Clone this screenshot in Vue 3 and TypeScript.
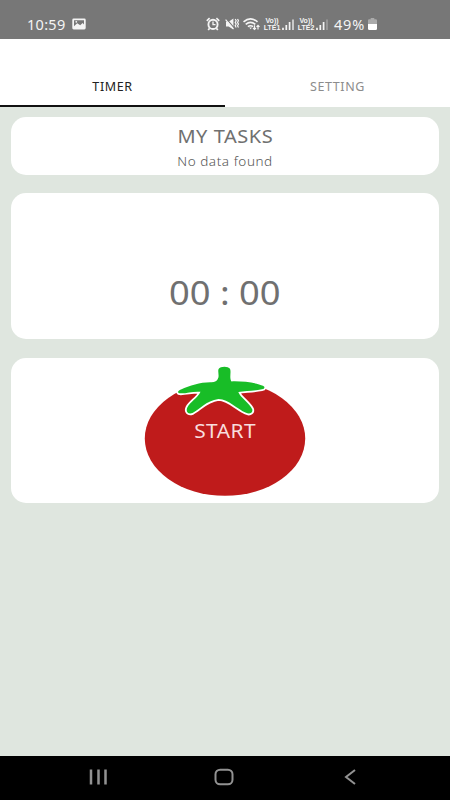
<script setup lang="ts">
import { ref } from 'vue'

type Tab = 'TIMER' | 'SETTING'

const tabs: Tab[] = ['TIMER', 'SETTING']
const activeTab = ref<Tab>('TIMER')
const minutes = ref(0)
const seconds = ref(0)
const sims = [1, 2]

const pad = (n: number): string => String(n).padStart(2, '0')
</script>

<template>
  <div class="screen">
    <header class="status">
      <span class="clock">10:59</span>
      <svg class="picture" width="14" height="12" viewBox="0 0 14 12">
        <rect x="0.3" y="0.5" width="13.4" height="11" rx="1.4" fill="#f4f4f4" />
        <path d="M2 8.2V2.2h10v4.2L10.6 5 8.2 7.3 5.2 5.2z" fill="#777" />
        <circle cx="4.3" cy="3.8" r="0.9" fill="#f4f4f4" />
      </svg>
      <div class="indicators">
        <svg class="alarm" width="14" height="14" viewBox="0 0 14 14" fill="none" stroke="#f4f4f4">
          <circle cx="7" cy="7.4" r="4.6" stroke-width="1.9" />
          <path d="M.8 3.8 3.6 1.2M13.2 3.8 10.4 1.2M3.6 11.2 2.2 13M10.4 11.2l1.4 1.8" stroke-width="1.7" />
          <path d="M7 4.6v3h2.5" stroke-width="1.3" />
        </svg>
        <svg class="mute" width="14" height="14" viewBox="0 0 14 14">
          <path d="M1 4.8h2.6L8.4 1.6v10.8L3.6 9.4H1z" fill="#f4f4f4" />
          <path d="M1.4 1.8 9.6 11.4" stroke="#777" stroke-width="1.2" />
          <path d="M0.6 2.6 8.4 11.8" stroke="#f4f4f4" stroke-width="1.2" />
          <path d="m10.200 2 1 1.700-1 1.700 1 1.700-1 1.700 1 1.700M12.500 2l1 1.700-1 1.700 1 1.700-1 1.700 1 1.700" fill="none" stroke="#f4f4f4" stroke-width="1.2" />
        </svg>
        <svg class="wifi" width="18" height="14" viewBox="0 0 18 14" fill="none" stroke="#f4f4f4">
          <path d="M.5 4.8q7-6 14 0M2.7 7.3q4.8-3.9 9.6 0M4.9 9.7q2.6-2 5.2 0" stroke-width="1.6" />
          <path d="m6.2 10.6 1.4 1.6L9 10.6z" fill="#f4f4f4" stroke="none" />
          <path d="M11.5 8.3v4.2m-1.5-1.5 1.5 1.5 1.5-1.5M15 12.5V8.3m-1.5 1.5L15 8.3l1.5 1.5" stroke-width="1.2" />
        </svg>
        <template v-for="sim in sims" :key="sim">
          <span class="volte"><b>Vo))</b><b>LTE{{ sim }}</b></span>
          <svg class="signal" width="13" height="11" viewBox="0 0 13 11">
            <path d="M1 8.7V11M4.3 6v5M7.6 3v8" stroke="#f4f4f4" stroke-width="1.7" />
            <path d="M11 .5V11" :stroke="sim === 1 ? '#e4e4e4' : '#a2a2a2'" stroke-width="1.5" />
          </svg>
        </template>
        <span class="percent">49%</span>
        <svg class="battery" width="9" height="12" viewBox="0 0 9 12">
          <path d="M2.7 0h3.6v1.2h1.5q1.2 0 1.2 1.2V6H0V2.400q0-1.200 1.200-1.200h1.500z" fill="#aaa" />
          <path d="M0 6h9v4.500Q9 12 7.800 12H1.200Q0 12 0 10.500z" fill="#fff" />
        </svg>
      </div>
    </header>

    <nav class="tabs">
      <button
        v-for="tab in tabs"
        :key="tab"
        class="tab"
        :class="{ active: tab === activeTab }"
        @click="activeTab = tab"
      >
        {{ tab }}
      </button>
    </nav>

    <main class="content">
      <section class="card tasks">
        <h1>MY TASKS</h1>
        <p>No data found</p>
      </section>
      <section class="card timer">
        <span class="time">{{ pad(minutes) }} : {{ pad(seconds) }}</span>
      </section>
      <section class="card starter">
        <button class="tomato">
          <svg width="162" height="132" viewBox="144 365 162 132">
            <ellipse cx="225" cy="438.5" rx="80.2" ry="57.3" fill="#bf1b1b" />
            <path
              d="M218 378.500C219.500 376 217.500 371.500 218.600 369C220.300 366 228 365.800 230 368.800C231.500 372 229 378 231.500 381.400C243 381 257 382.900 263 385.800C265.500 387 264.500 389 262 389.300C253 391 246 390.900 238.300 392C240 397.500 250 403.500 252.300 409.500C253 413.300 249 414.500 246 412.800C237 409 229 399.500 218.500 399C206 400.500 199 410 192.500 413C188 414.700 185.500 411.500 187.300 407.500C190 402 198 398 200.500 391.800C193 391 186 393.800 179.500 393.300C177 392.500 178 390.500 181 389.500C190 385.500 201 382 211.500 382.300C215 382.300 217 381 218 378.500Z"
              fill="#18bd27"
              stroke="#fff"
              stroke-width="3.600"
              stroke-linejoin="round"
              paint-order="stroke"
            />
          </svg>
          <span class="label">START</span>
        </button>
      </section>
    </main>

    <footer class="navbar">
      <svg width="18" height="18" viewBox="0 0 18 18">
        <path d="M2 1.500v15M9.500 1.500v15M16.500 1.500v15" stroke="#929292" stroke-width="2.500" />
      </svg>
      <svg width="20" height="18" viewBox="0 0 20 18">
        <rect x="1.500" y="1.700" width="17" height="14.600" rx="4.600" fill="none" stroke="#929292" stroke-width="2" />
      </svg>
      <svg width="12" height="18" viewBox="0 0 12 18">
        <path d="M11 2 2 9l9 7" fill="none" stroke="#929292" stroke-width="2" />
      </svg>
    </footer>
  </div>
</template>

<style>
body {
  margin: 0;
}
</style>

<style scoped>
.screen {
  display: flex;
  flex-direction: column;
  width: 450px;
  height: 800px;
  overflow: hidden;
  background: #dfe6df;
  font-family: "Noto Sans", sans-serif;
  font-weight: 400;
}
button {
  border: 0;
  padding: 0;
  background: none;
  font: inherit;
}
svg {
  display: block;
  flex: none;
}
.status {
  display: flex;
  align-items: center;
  box-sizing: border-box;
  height: 39px;
  padding: 9px 73px 0 27px;
  background: #777;
  color: #f4f4f4;
}
.clock {
  width: 45px;
  font-size: 14.5px;
  letter-spacing: 0.3px;
  white-space: nowrap;
}
.indicators {
  display: flex;
  align-items: center;
  margin-left: auto;
}
.mute {
  margin-left: 5px;
}
.wifi {
  margin-left: 4px;
}
.volte {
  display: flex;
  flex-direction: column;
  align-items: center;
  width: 18px;
  margin-left: 2px;
  font-family: "Liberation Sans", sans-serif;
  font-size: 7px;
  line-height: 7px;
}
.volte b {
  font-weight: 700;
}
.signal {
  margin-left: 1px;
}
.percent {
  width: 32px;
  margin-left: 5px;
  font-size: 14.5px;
  letter-spacing: 0.8px;
  white-space: nowrap;
}
.battery {
  margin-left: 2px;
}
.tabs {
  display: flex;
  height: 68px;
  background: #fff;
}
.tab {
  flex: 1;
  box-sizing: border-box;
  padding-top: 28px;
  border-bottom: 2px solid #fff;
  color: #8c8c8c;
  font-size: 12.5px;
  letter-spacing: 0.6px;
}
.tab.active {
  border-color: #111;
  color: #222;
}
.content {
  display: flex;
  flex: 1;
  flex-direction: column;
  gap: 18.5px;
  padding: 10px 11px 0;
}
.card {
  display: flex;
  flex-direction: column;
  align-items: center;
  box-sizing: border-box;
  border-radius: 15px;
  background: #fff;
  color: #707070;
}
.tasks {
  height: 57.5px;
}
.tasks h1 {
  margin: 5px 0 0;
  font-size: 18.5px;
  font-weight: 400;
  line-height: 28px;
  letter-spacing: 0.5px;
  transform: scaleX(1.08);
}
.tasks p {
  margin: 0;
  color: #555;
  font-size: 13.5px;
  font-weight: 300;
  line-height: 23px;
  letter-spacing: 0.55px;
}
.timer {
  height: 146px;
  padding-top: 77px;
}
.time {
  font-size: 33px;
  line-height: 46px;
  white-space: pre;
  transform: scaleX(1.1);
}
.starter {
  height: 145px;
  padding-top: 7px;
}
.tomato {
  display: grid;
  place-items: center;
}
.tomato > * {
  grid-area: 1 / 1;
}
.label {
  color: #f8dddd;
  font-size: 19px;
  letter-spacing: 0.4px;
  transform: scaleX(1.1);
}
.navbar {
  display: flex;
  align-items: center;
  justify-content: space-between;
  box-sizing: border-box;
  height: 44px;
  padding: 0 94px 2px 89px;
  background: #000;
}
.navbar svg:nth-child(2) {
  margin-right: 3px;
}
</style>
